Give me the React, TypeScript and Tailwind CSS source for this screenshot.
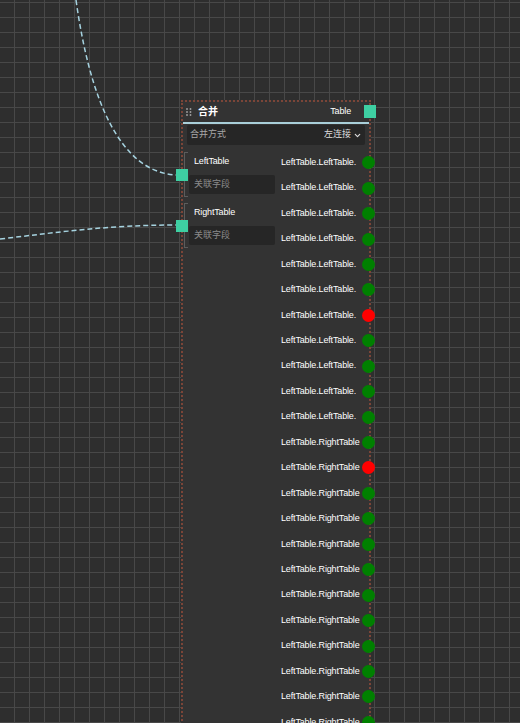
import React from 'react';
import { ChevronDown } from 'lucide-react';

type OutputField = { label: string; ok: boolean };

const outputs: OutputField[] = [
  ...Array.from({ length: 11 }, (_, i) => ({ label: 'LeftTable.LeftTable.', ok: i !== 6 })),
  ...Array.from({ length: 13 }, (_, i) => ({ label: 'LeftTable.RightTable', ok: i !== 1 })),
];

const inputs = ['LeftTable', 'RightTable'];

const DragDots = () => (
  <svg width="6" height="8" viewBox="0 0 6 8" className="shrink-0">
    {[1, 4.5].map((x) =>
      [1, 4, 7].map((y) => <rect key={`${x}-${y}`} x={x - 0.75} y={y - 0.75} width="1.5" height="1.5" fill="#b8b8b8" />)
    )}
  </svg>
);

const InputGroup: React.FC<{ name: string }> = ({ name }) => (
  <div className="relative ml-[1px] h-[45px] pl-[5px]">
    {/* bracket */}
    <span className="absolute left-0 top-0 bottom-0 w-[4px] border-y border-l border-[#5c5c5c]" />
    {/* handle */}
    <span className="absolute left-[-8px] top-1/2 -translate-y-1/2 w-[12px] h-[12px] bg-[#3ecfa2]" />
    <div className="h-[19px] flex items-center pl-[5px] text-[9px] tracking-[-0.15px] text-white">{name}</div>
    <div className="mt-[4px] w-[86px] h-[19px] flex items-center pl-[5px] bg-[#262626] rounded-[2px] text-[9px] text-[#8a8a8a]">
      关联字段
    </div>
  </div>
);

export default function App() {
  return (
    <div className="relative w-[520px] h-[723px] overflow-hidden bg-[#2e2e2e] bg-[linear-gradient(to_right,#484848_1px,transparent_1px),linear-gradient(to_bottom,#484848_1px,transparent_1px)] bg-size-[15px_15px] bg-position-[14px_2px] font-['Liberation_Sans','Noto_Sans_CJK_SC',sans-serif]">
      {/* edges */}
      <svg className="absolute inset-0 pointer-events-none" width="520" height="723">
        <path d="M76,0 C90,100 120,172 176,175" fill="none" stroke="#a6d3e0" strokeWidth="1.5" strokeDasharray="5 3" />
        <path d="M0,239 C60,232 110,225 176,225" fill="none" stroke="#a6d3e0" strokeWidth="1.5" strokeDasharray="5 3" />
      </svg>

      {/* merge node */}
      <div className="absolute left-[181px] top-[100px] w-[190px] bg-[#333333] border-2 border-dotted border-[#7b4538]">
        {/* header */}
        <div className="relative h-[20px] flex items-center pl-[3px] pr-[18px]">
          <DragDots />
          <span className="ml-[6px] -mt-[3px] text-[10px] font-bold text-white font-['Noto_Sans_CJK_SC',sans-serif]">合并</span>
          <span className="ml-auto text-[9px] tracking-[-0.15px] text-white">Table</span>
          <span className="absolute right-[-7px] top-[3px] w-[12px] h-[13px] bg-[#3ecfa2]" />
        </div>
        <div className="h-[2px] bg-[#a9cfd9]" />

        {/* join select */}
        <div className="mt-[1px] mx-[4px] h-[20px] flex items-center pl-[3px] pr-[3px] bg-[#262626] rounded-[2px]">
          <span className="text-[9px] text-[#a8a8a8]">合并方式</span>
          <span className="ml-auto text-[9px] text-[#dddddd]">左连接</span>
          <ChevronDown size={9} strokeWidth={3} className="ml-[2px] text-[#dddddd]" />
        </div>

        {/* body */}
        <div className="flex">
          <div className="w-[95px] shrink-0 pt-[7px] flex flex-col gap-[6px]">
            {inputs.map((name) => (
              <InputGroup key={name} name={name} />
            ))}
          </div>
          <div className="flex-1 min-w-0 pt-[5px] pl-[3px] pb-[10px]">
            {outputs.map((o, i) => (
              <div key={i} className="h-[25.45px] flex items-center -mr-[6px]">
                <span className="flex-1 min-w-0 overflow-hidden whitespace-nowrap text-[9px] tracking-[-0.15px] text-white">
                  {o.label}
                </span>
                <span className={`shrink-0 w-[13px] h-[13px] rounded-full ${o.ok ? 'bg-[#008000]' : 'bg-[#ff0000]'}`} />
              </div>
            ))}
          </div>
        </div>
      </div>
    </div>
  );
}
